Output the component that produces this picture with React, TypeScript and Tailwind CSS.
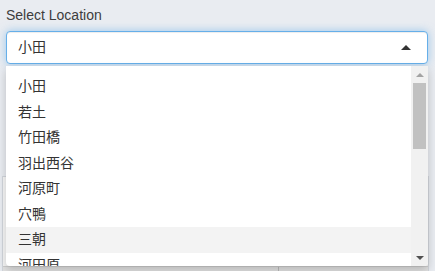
const locations = ["小田", "若土", "竹田橋", "羽出西谷", "河原町", "穴鴨", "三朝", "河田原", "大谷"];

function Caret({ up, className }: { up: boolean; className?: string }) {
  return (
    <svg width="10" height="5" viewBox="0 0 10 5" className={className}>
      {up ? <path d="M0 5 L5 0 L10 5 Z" fill="currentColor" /> : <path d="M0 0 L10 0 L5 5 Z" fill="currentColor" />}
    </svg>
  );
}

export default function App() {
  const selected = "小田";
  const hovered = "三朝";

  return (
    <main
      className="relative h-[271px] w-[435px] overflow-hidden bg-[#e9ecf1] text-[#333]"
      style={{ fontFamily: '"Liberation Sans", "Noto Sans CJK JP", sans-serif' }}
    >
      <div className="px-[6px] pt-[5px]">
        <label className="block text-[14px] leading-[20px] text-[#3d3d3d]">Select Location</label>
        <div className="relative mt-[6px] mr-[1px]">
          <button className="flex h-[33px] w-[422px] items-center justify-between rounded-[4px] border border-[#66afe9] bg-white pr-[16px] pl-[11px] text-[14px] shadow-[inset_0_1px_1px_rgba(0,0,0,0.075),0_0_8px_rgba(102,175,233,0.6)]">
            <span>{selected}</span>
            <Caret up className="text-[#333]" />
          </button>

          <div className="absolute top-[35px] left-0 z-10 flex h-[200px] w-[422px] overflow-hidden rounded-b-[4px] bg-white shadow-[0_4px_10px_rgba(0,0,0,0.2)]">
            <ul className="flex-1 pt-[8px] text-[14px]">
              {locations.map((name) => (
                <li
                  key={name}
                  className={`h-[25.5px] pl-[12px] leading-[24px] ${name === hovered ? "bg-[#f3f3f3]" : ""}`}
                >
                  {name}
                </li>
              ))}
            </ul>
            <div className="flex w-[17px] flex-col items-center bg-[#f1f1f1]">
              <div className="flex h-[17px] w-full items-center justify-center">
                <Caret up className="h-[4px] w-[8px] text-[#a3a3a3]" />
              </div>
              <div className="mt-[0px] h-[66px] w-[13px] bg-[#c1c1c1]" />
              <div className="flex-1" />
              <div className="flex h-[17px] w-full items-center justify-center">
                <Caret up={false} className="h-[4px] w-[8px] text-[#505050]" />
              </div>
            </div>
          </div>
        </div>
      </div>

      <div className="mt-[112px] ml-[2px] mr-[6px] h-[120px] border border-[#d2d6dc] bg-[#f7f7f7]">
        <div className="mt-[89px] flex h-[10px] border-t border-[#cfcfcf] bg-[#e2e2e2]">
          <div className="w-[276px] border-r border-[#bbb]" />
        </div>
      </div>
    </main>
  );
}
